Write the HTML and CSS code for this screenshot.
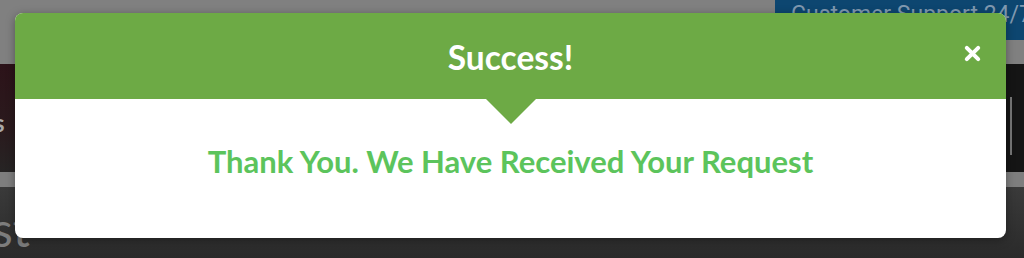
FILE: index.html
```html
<html lang="en">

<head>
    <meta charset="UTF-8">
    <meta name="viewport" content="width=device-width, initial-scale=1.0">
    <title>Success</title>
    <link rel="stylesheet" href="styles.css">
</head>

<body>
    <div class="page">
        <div class="top-bar">
            <div class="support">Customer Support 24/7</div>
        </div>
        <div class="nav-band">
            <div class="nav-left"><span class="nav-word">s</span></div>
            <div class="nav-right"><span class="scroll-line"></span></div>
        </div>
        <div class="divider"></div>
        <div class="lower">
            <span class="heading-word">st</span>
        </div>
    </div>

    <div class="modal">
        <div class="modal-head">
            <h2>Success!</h2>
            <button type="button" class="close">
                <svg viewBox="0 0 20 20" width="19" height="19">
                    <path d="M4 4 L16 16 M16 4 L4 16" stroke="#fff" stroke-width="4.2" stroke-linecap="round" />
                </svg>
            </button>
            <span class="arrow"></span>
        </div>
        <div class="modal-body">
            <p>Thank You. We Have Received Your Request</p>
        </div>
    </div>
</body>

</html>
```

FILE: styles.css
```css
html, body {
    margin: 0;
    padding: 0;
}

body {
    width: 1024px;
    height: 258px;
    overflow: hidden;
    position: relative;
    font-family: Lato, "Open Sans", sans-serif;
    background-color: #2f2f2f;
}

.page {
    display: flex;
    flex-direction: column;
    height: 258px;
}

.top-bar {
    height: 64px;
    background-color: #808080;
    display: flex;
    justify-content: flex-end;
    align-items: flex-start;
}

.support {
    width: 233px;
    height: 40px;
    background-color: #0d4670;
    color: #8099b0;
    font-family: Roboto, sans-serif;
    font-size: 23px;
    padding-left: 16px;
    line-height: 30px;
    white-space: nowrap;
    overflow: hidden;
}

.nav-band {
    height: 108px;
    display: flex;
}

.nav-left {
    flex: 1;
    background: linear-gradient(#2c1319, #2a1a1d 60%, #262424);
    color: #a8a8a8;
    font-size: 24px;
    font-weight: bold;
    padding-top: 44px;
}

.nav-word {
    margin-left: -6px;
}

.nav-right {
    width: 56px;
    background-color: #151515;
    display: flex;
    justify-content: flex-end;
    padding-top: 33px;
}

.scroll-line {
    width: 2px;
    height: 58px;
    background-color: #777;
    margin-right: 12px;
}

.divider {
    height: 15px;
    background-color: #7e7e7e;
}

.lower {
    flex: 1;
    background: linear-gradient(#3a3a3a, #2a2a2a);
    color: #7d7d7d;
    font-size: 48px;
    line-height: 48px;
}

.heading-word {
    display: inline-block;
    margin-left: -8px;
    margin-top: 18px;
}

.modal {
    position: absolute;
    left: 15px;
    top: 13px;
    width: 991px;
    height: 225px;
    background-color: #fff;
    border-radius: 8px;
    box-shadow: 0 2px 10px rgba(0, 0, 0, 0.35);
    display: flex;
    flex-direction: column;
}

.modal-head {
    position: relative;
    height: 86px;
    background-color: #6daa45;
    border-radius: 8px 8px 0 0;
    display: flex;
    align-items: center;
    justify-content: center;
}

.modal-head h2 {
    margin: 0;
    color: #fff;
    font-size: 33.5px;
    font-weight: bold;
    padding-top: 2px;
}

.close {
    position: absolute;
    right: 24px;
    top: 31px;
    background: none;
    border: none;
    padding: 0;
    width: 19px;
    height: 19px;
}

.close svg {
    display: block;
}

.arrow {
    position: absolute;
    left: 471px;
    bottom: -25px;
    width: 0;
    height: 0;
    border-left: 25px solid transparent;
    border-right: 25px solid transparent;
    border-top: 25px solid #6daa45;
}

.modal-body {
    flex: 1;
    display: flex;
    justify-content: center;
    padding-top: 44px;
}

.modal-body p {
    margin: 0;
    color: #5cc45c;
    font-size: 31px;
    font-weight: bold;
    line-height: 36px;
}
```
